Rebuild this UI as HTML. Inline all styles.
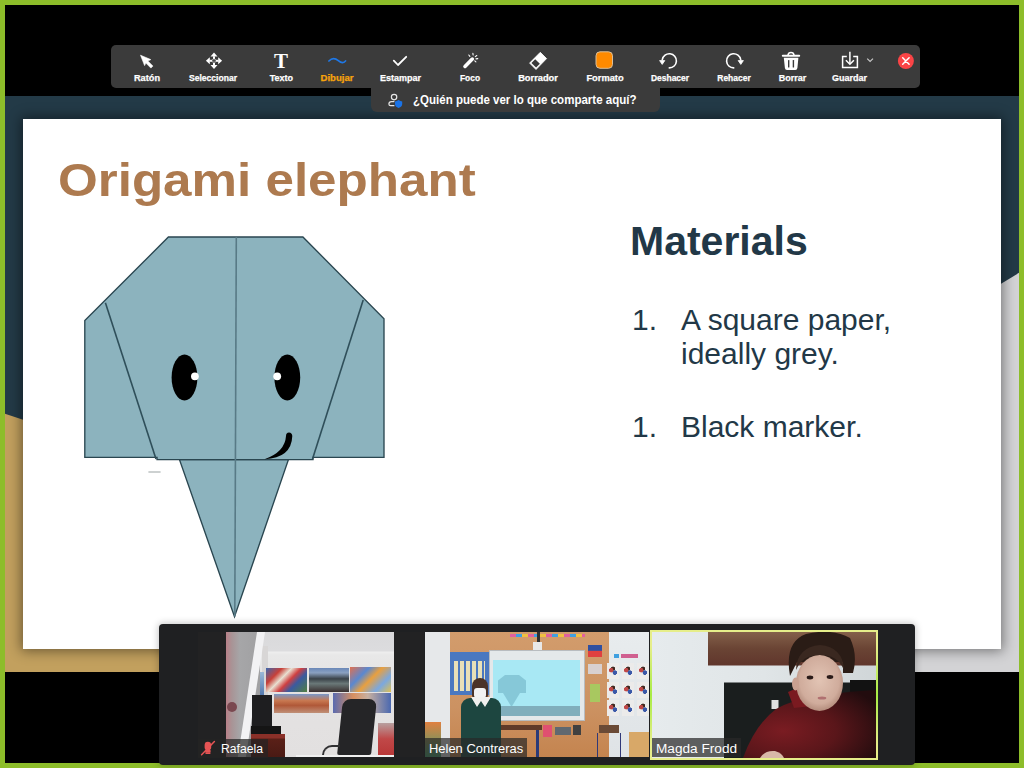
<!DOCTYPE html>
<html><head><meta charset="utf-8">
<style>
*{margin:0;padding:0;box-sizing:border-box}
html,body{width:1024px;height:768px;overflow:hidden;background:#000;font-family:"Liberation Sans",sans-serif}
#frame{position:absolute;left:0;top:0;width:1024px;height:768px;border:5px solid #8dbd2a;background:#000}
#pres{position:absolute;left:5px;top:96px;width:1014px;height:576px;background:#233a47;overflow:hidden}
#slide{position:absolute;left:23px;top:119px;width:978px;height:530px;background:#fff;box-shadow:0 0 12px 2px rgba(0,0,0,0.45)}
.abs{position:absolute}
#toolbar{position:absolute;left:111px;top:45px;width:809px;height:43px;background:#3b3b3b;border-radius:5px}
#tab{position:absolute;left:371px;top:87px;width:289px;height:25px;background:#3b3b3b;border-radius:0 0 6px 6px}
.tl{position:absolute;top:73.9px;-webkit-text-stroke:0.25px currentColor;line-height:9px;font-size:9px;font-weight:bold;color:#fff;white-space:nowrap;transform:translateX(-50%)}
#strip{position:absolute;left:159px;top:624px;width:756px;height:141px;background:#1f2022;border-radius:4px;box-shadow:0 0 7px 1px rgba(0,0,0,0.22)}
.tn{font-size:12.5px;line-height:12.5px;color:#fff;white-space:nowrap;transform-origin:0 0}
</style></head><body>
<div id="frame"></div>
<div id="pres">
  <svg class="abs" style="left:0;top:0" width="1014" height="576" viewBox="5 96 1014 576">
    <polygon points="5,413.8 600,610.8 600,672 5,672" fill="#c2a05e"/>
    <polygon points="1019,272.8 500,587.3 500,672 1019,672" fill="#d3d3d5"/>
  </svg>
</div>
<div id="slide">
</div>
<svg class="abs" style="left:0;top:0" width="1024" height="768" viewBox="0 0 1024 768">
<g stroke="#2a4650" stroke-width="1.35" fill="#8cb3be" stroke-linejoin="miter">
<polygon points="179.5,459.6 288.4,459.6 234.5,616.8"/>
<polygon points="168.4,237 302.9,237 384,318.7 384,457.3 313,457.3 313,459.6 157,459.6 157,457.3 84.8,457.3 84.8,320.6"/>
</g>
<g stroke="#2f4f5a" stroke-width="1.6" fill="none">
<line x1="105.4" y1="302.7" x2="156" y2="459"/>
<line x1="363.2" y1="300" x2="312.5" y2="459"/>
<line x1="236.3" y1="237" x2="234.8" y2="616.6" stroke="#587a86"/>
</g>
<ellipse cx="184.5" cy="377.5" rx="12.9" ry="23" fill="#000"/>
<ellipse cx="287.3" cy="377.5" rx="12.9" ry="23" fill="#000"/>
<circle cx="194.9" cy="376.3" r="3.9" fill="#fff"/>
<circle cx="277.2" cy="376.3" r="3.9" fill="#fff"/>
<path d="M149,472 L160,472" stroke="#9aa4a4" stroke-width="1.6" opacity="0.65" stroke-linecap="round"/>
<path d="M264.5,459.2 Q291.5,458 292.3,436 Q292,432.5 289,432.5 Q286,432.5 286,436 Q285,452 264.5,459.2 Z" fill="#000"/>
</svg>
<div id="title" class="abs" style="left:58px;top:155.5px;font-size:47px;line-height:47px;font-weight:bold;color:#ad7a4f;white-space:nowrap;transform-origin:0 0;transform:scaleX(1.088)">Origami elephant</div>
<div class="abs" style="left:630px;top:221px;font-size:41px;line-height:41px;font-weight:bold;color:#223847;white-space:nowrap">Materials</div>
<div class="abs" style="left:632px;top:303px;font-size:30px;line-height:34.3px;color:#223847;white-space:nowrap">1.</div>
<div class="abs" style="left:681px;top:303px;font-size:30px;line-height:34.3px;color:#223847;white-space:nowrap">A square paper,<br>ideally grey.</div>
<div class="abs" style="left:632px;top:410px;font-size:30px;line-height:34.3px;color:#223847;white-space:nowrap">1.</div>
<div class="abs" style="left:681px;top:410px;font-size:30px;line-height:34.3px;color:#223847;white-space:nowrap">Black marker.</div>
<div id="toolbar"></div>
<div id="tab"></div>
<svg class="abs" style="left:0;top:0" width="1024" height="120" viewBox="0 0 1024 120">
<path d="M140.5,55.2 L150.8,59.6 L147.9,61.1 L152.9,66.1 L150.9,68.1 L145.9,63.1 L144.6,65.6 Z" fill="#fff" stroke="#fff" stroke-width="0.6" stroke-linejoin="round"/>
<g fill="#fff">
<path d="M214,52.6 L217.5,56.5 L210.5,56.5 Z"/><rect x="213" y="56.3" width="2" height="2.6"/>
<path d="M214,69 L217.5,65.1 L210.5,65.1 Z"/><rect x="213" y="62.7" width="2" height="2.6"/>
<path d="M205.9,60.8 L209.8,57.3 L209.8,64.3 Z"/><rect x="209.6" y="59.8" width="2.6" height="2"/>
<path d="M222.1,60.8 L218.2,57.3 L218.2,64.3 Z"/><rect x="215.8" y="59.8" width="2.6" height="2"/>
<rect x="212.4" y="59.2" width="1" height="1"/><rect x="214.6" y="59.2" width="1" height="1"/>
<rect x="212.4" y="61.4" width="1" height="1"/><rect x="214.6" y="61.4" width="1" height="1"/>
</g>
<text x="281" y="68.3" font-family="Liberation Serif" font-weight="bold" font-size="21" fill="#fff" text-anchor="middle">T</text>
<path d="M328.9,61 C331.8,58 335,58 338.3,60.6 C341.5,63.3 344,63.3 345.6,60.9" stroke="#1f78e6" stroke-width="1.7" fill="none" stroke-linecap="round"/>
<path d="M393.8,60.6 L398,65 L406.2,56.8" stroke="#fff" stroke-width="1.8" fill="none" stroke-linecap="round" stroke-linejoin="round"/>
<path d="M465,66.4 L472.3,59.1" stroke="#fff" stroke-width="3.6" stroke-linecap="round"/>
<g stroke="#fff" stroke-width="1.1" stroke-linecap="round">
<path d="M468.8,55 L469.9,56.4"/><path d="M472.9,53.3 L473.1,55"/><path d="M476.8,55.5 L475.3,56.6"/><path d="M477.8,58.6 L476,58.9"/><path d="M475.9,61.8 L474.8,60.8"/>
</g>
<path d="M540.3,52.3 L546.6,58.6 L536,69.5 L529.6,63.1 Z" fill="#fff" stroke="#fff" stroke-width="0.8" stroke-linejoin="round"/>
<path d="M535.22,59.15 L539.85,63.72 L536.07,67.57 L531.44,63 Z" fill="#3b3b3b"/>

<rect x="596" y="51.8" width="16.5" height="16.5" rx="4" fill="#ff8a00" stroke="#d9bf9c" stroke-width="1"/>
<path d="M669.3,67.9 A7.1,7.1 0 1 0 662.3,59.6" stroke="#fff" stroke-width="1.6" fill="none" stroke-linecap="round"/>
<path d="M659.6,60.6 L664.8,60.6 L662.2,64.4 Z" fill="#fff" stroke="#fff" stroke-width="0.8" stroke-linejoin="round"/>
<path d="M733.7,67.9 A7.1,7.1 0 1 1 740.7,59.6" stroke="#fff" stroke-width="1.6" fill="none" stroke-linecap="round"/>
<path d="M738.2,60.6 L743.4,60.6 L740.8,64.4 Z" fill="#fff" stroke="#fff" stroke-width="0.8" stroke-linejoin="round"/>
<path d="M782.8,55.8 L799.2,55.8" stroke="#fff" stroke-width="2" stroke-linecap="round"/>
<path d="M787.9,55.3 Q788.3,52.6 791,52.6 Q793.7,52.6 794.1,55.3" stroke="#fff" stroke-width="1.5" fill="none"/>
<path d="M783.8,57.8 L798.4,57.8 L797.4,68 Q797.2,69.9 795.3,69.9 L787,69.9 Q785.1,69.9 784.9,68 Z" fill="#fff"/>
<rect x="788" y="60.1" width="1.4" height="7.4" rx="0.5" fill="#3b3b3b"/>
<rect x="792.7" y="60.1" width="1.4" height="7.4" rx="0.5" fill="#3b3b3b"/>
<path d="M846.8,56.6 L842.6,56.6 L842.6,67.4 L857.4,67.4 L857.4,56.6 L853.2,56.6" stroke="#fff" stroke-width="1.5" fill="none"/>
<path d="M849.9,51.8 L849.9,63.6" stroke="#fff" stroke-width="1.5"/>
<path d="M845.9,60.2 L849.9,64.2 L853.9,60.2" stroke="#fff" stroke-width="1.5" fill="none"/>
<path d="M867.2,58.6 L870.1,61.5 L873,58.6" stroke="#c8c8c8" stroke-width="1.2" fill="none"/>
<circle cx="905.9" cy="61" r="8" fill="#fa4446"/>
<path d="M902.7,57.8 L909.1,64.2 M909.1,57.8 L902.7,64.2" stroke="#fff" stroke-width="1.5" stroke-linecap="round"/>
<circle cx="394.1" cy="97.1" r="2.7" stroke="#e6e6e6" stroke-width="1.2" fill="none"/>
<path d="M394.4,101.7 L391.5,101.7 Q388.9,101.8 388.9,104 Q388.9,105.6 390.6,105.6 L394.4,105.6" stroke="#e6e6e6" stroke-width="1.2" fill="none"/>
<path d="M398.6,99.9 Q400.5,101.3 402.2,101.5 L402.2,104.2 Q402,106.8 398.6,108 Q395.2,106.8 395,104.2 L395,101.5 Q396.7,101.3 398.6,99.9 Z" fill="#1a73e8"/>
</svg>
<div class="abs" style="left:412.9px;top:93.8px;font-size:12.5px;line-height:12.5px;font-weight:bold;color:#fff;white-space:nowrap;transform-origin:0 0;transform:scaleX(0.922)">¿Quién puede ver lo que comparte aquí?</div>
<div class="tl" style="left:147.1px;color:#fff;transform:translateX(-50%) scaleX(1.02)">Ratón</div>
<div class="tl" style="left:213.2px;color:#fff;transform:translateX(-50%) scaleX(0.95)">Seleccionar</div>
<div class="tl" style="left:281.4px;color:#fff;transform:translateX(-50%) scaleX(1)">Texto</div>
<div class="tl" style="left:337.4px;color:#f7a30c;transform:translateX(-50%) scaleX(1.06)">Dibujar</div>
<div class="tl" style="left:400.4px;color:#fff;transform:translateX(-50%) scaleX(1)">Estampar</div>
<div class="tl" style="left:470.1px;color:#fff;transform:translateX(-50%) scaleX(0.93)">Foco</div>
<div class="tl" style="left:538.3px;color:#fff;transform:translateX(-50%) scaleX(1.03)">Borrador</div>
<div class="tl" style="left:604.8px;color:#fff;transform:translateX(-50%) scaleX(1.03)">Formato</div>
<div class="tl" style="left:669.5px;color:#fff;transform:translateX(-50%) scaleX(0.94)">Deshacer</div>
<div class="tl" style="left:734.0px;color:#fff;transform:translateX(-50%) scaleX(0.94)">Rehacer</div>
<div class="tl" style="left:792.5px;color:#fff;transform:translateX(-50%) scaleX(1)">Borrar</div>
<div class="tl" style="left:849.4px;color:#fff;transform:translateX(-50%) scaleX(1)">Guardar</div>
<div id="strip"></div>
<div id="tiles">
<div class="abs" style="left:198px;top:632px;width:226px;height:125px;background:#222223"></div>
<!-- tile1 -->
<div class="abs" style="left:226px;top:632px;width:168px;height:125px;overflow:hidden;background:linear-gradient(#d9d9db 0,#dcdcde 19px,#eeeeee 20px,#e8e8e8 23px,#e4e2e2 60px,#e2e0e0 125px)">
  <div class="abs" style="left:36px;top:14px;width:6px;height:111px;background:#d8d6d6"></div>
  <div class="abs" style="left:31px;top:40px;width:7px;height:27px;background:linear-gradient(#9ab8d8,#4a70a8)"></div>
  <div class="abs" style="left:0;top:0;width:34px;height:125px;background:linear-gradient(90deg,#b88088 0,#a89496 6px,#a6a6a8 14px,#a0a0a2 34px)"></div>
  <div class="abs" style="left:30.5px;top:0;width:7.5px;height:125px;background:#f2f2f4;transform:skewX(-8.7deg);transform-origin:0 0"></div>
  <div class="abs" style="left:1px;top:70px;width:10px;height:10px;border-radius:50%;background:#7a4850"></div>
  <div class="abs" style="left:40px;top:36px;width:41px;height:24px;background:linear-gradient(135deg,#3a68b0 0,#c84038 25%,#e8e0d0 40%,#d04040 55%,#3a5aa0 70%,#508040 100%)"></div>
  <div class="abs" style="left:83px;top:35.5px;width:40px;height:24.5px;background:linear-gradient(#6a88b8 0,#8aa0c0 20%,#3a4248 45%,#6a7878 65%,#3a3030 100%)"></div>
  <div class="abs" style="left:124px;top:35px;width:41px;height:25px;background:linear-gradient(135deg,#e07050 0,#5a88d0 30%,#e8a040 50%,#7aa8e0 75%,#e0c050 100%)"></div>
  <div class="abs" style="left:47.5px;top:62px;width:55px;height:19px;background:linear-gradient(#7a98c8 0,#c87850 35%,#b05838 60%,#c09078 100%)"></div>
  <div class="abs" style="left:106.5px;top:61px;width:58px;height:20px;background:linear-gradient(90deg,#5a6ab0,#d89060 35%,#c8b0a0 60%,#4a68b0)"></div>
  <div class="abs" style="left:26px;top:63px;width:20px;height:31px;background:#1e1e20"></div>
  <div class="abs" style="left:24.5px;top:94px;width:30px;height:8px;background:#151515"></div>
  <div class="abs" style="left:24.5px;top:101.5px;width:34.5px;height:23.5px;background:linear-gradient(#8a3028 0,#8a3028 4px,#5a2018 5px,#4a1a14 100%)"></div>
  <div class="abs" style="left:114px;top:67px;width:34px;height:56px;background:#252527;border-radius:8px 8px 2px 2px;transform:skewX(-6deg)"></div>
  <div class="abs" style="left:96px;top:113px;width:18px;height:14px;border:2px solid #303032;border-right:none;border-bottom:none;border-radius:10px 0 0 0"></div>
  <div class="abs" style="left:152px;top:91px;width:16px;height:32px;background:linear-gradient(#b8a0a0,#c04848 50%,#b83838)"></div>
  <div class="abs" style="left:70px;top:123px;width:98px;height:2px;background:#f0f0f0"></div>
</div>
<div class="abs" style="left:198px;top:738.5px;width:69.5px;height:19px;background:rgba(36,36,36,0.72)"></div>
<svg class="abs" style="left:195px;top:735px" width="25" height="25" viewBox="0 0 25 25">
<path d="M12.8,6.8 Q16.2,6.8 16.2,10.2 L16.2,12.5 Q16.2,14 15.2,14.6 L15.8,16.2 L15,17.5 L10.7,17.5 L10,16.2 L10.6,14.6 Q9.6,14 9.6,12.5 L9.6,10.2 Q9.6,6.8 12.8,6.8 Z" fill="#e65454"/>
<rect x="10.2" y="17.3" width="5.5" height="1.6" rx="0.8" fill="#e65454"/>
<path d="M6.6,19.8 L19.4,6.6" stroke="#e65454" stroke-width="1.5" stroke-linecap="round"/>
</svg>
<div class="abs tn" style="left:221px;top:743px;transform:scaleX(0.975)">Rafaela</div>
<!-- tile2 -->
<div class="abs" style="left:425px;top:632px;width:224px;height:125px;overflow:hidden;background:#e6e8ea">
  <div class="abs" style="left:25px;top:0;width:159px;height:125px;background:linear-gradient(#d29c6c,#cc9262 60%,#c4844f)"></div>
  <div class="abs" style="left:85px;top:2px;width:75px;height:3px;background:repeating-linear-gradient(90deg,#e060a0 0,#e060a0 6px,#40a0e0 6px,#40a0e0 12px,#f0c040 12px,#f0c040 18px)"></div>
  <div class="abs" style="left:112px;top:0;width:3px;height:20px;background:#303030"></div>
  <div class="abs" style="left:108px;top:10px;width:9px;height:8px;background:#e8e8e8"></div>
  <div class="abs" style="left:111px;top:94px;width:3px;height:31px;background:#2a3a78"></div>
  <div class="abs" style="left:76px;top:93px;width:41px;height:5px;background:#603a28"></div>
  <div class="abs" style="left:184px;top:0;width:40px;height:125px;background:linear-gradient(#e8ecee,#dfe3e6)"></div>
  <div class="abs" style="left:25px;top:20px;width:39px;height:43px;background:#4a78c0"></div>
  <div class="abs" style="left:29px;top:29px;width:31px;height:30px;background:repeating-linear-gradient(90deg,#e8e0b8 0,#e8e0b8 4px,#4a78c0 4px,#4a78c0 6px)"></div>
  <div class="abs" style="left:64px;top:18px;width:96px;height:71px;background:#e4e8ea;border:1px solid #b8bcc0"></div>
  <div class="abs" style="left:68px;top:28px;width:87px;height:56px;background:#a8e8f4"></div>
  <div class="abs" style="left:73px;top:43px;width:28px;height:18px;background:#86c8d8;clip-path:polygon(25% 0,75% 0,100% 30%,100% 100%,0 100%,0 30%)"></div>
  <div class="abs" style="left:78px;top:61px;width:17px;height:14px;background:#86c8d8;clip-path:polygon(0 0,100% 0,50% 100%)"></div>
  <div class="abs" style="left:68px;top:74px;width:87px;height:10px;background:#80aebc"></div>
  <div class="abs" style="left:163px;top:13px;width:14px;height:12px;background:linear-gradient(#3050a0 0,#3050a0 45%,#e04040 50%)"></div>
  <div class="abs" style="left:163px;top:32px;width:14px;height:10px;background:#d8d0d0"></div>
  <div class="abs" style="left:165px;top:52px;width:10px;height:18px;background:#a8c860"></div>
  <div class="abs" style="left:182px;top:31px;width:12px;height:16px;background:radial-gradient(circle at 35% 45%,#c04848 0,#c04848 2px,transparent 2.5px),radial-gradient(circle at 65% 60%,#3a58a8 0,#3a58a8 2px,transparent 2.5px),radial-gradient(circle at 50% 35%,#402820 0,#402820 1.8px,transparent 2.3px),#ecebea"></div>
  <div class="abs" style="left:182px;top:50px;width:12px;height:16px;background:radial-gradient(circle at 35% 45%,#c04848 0,#c04848 2px,transparent 2.5px),radial-gradient(circle at 65% 60%,#3a58a8 0,#3a58a8 2px,transparent 2.5px),radial-gradient(circle at 50% 35%,#402820 0,#402820 1.8px,transparent 2.3px),#ecebea"></div>
  <div class="abs" style="left:182px;top:68px;width:12px;height:16px;background:radial-gradient(circle at 35% 45%,#c04848 0,#c04848 2px,transparent 2.5px),radial-gradient(circle at 65% 60%,#3a58a8 0,#3a58a8 2px,transparent 2.5px),radial-gradient(circle at 50% 35%,#402820 0,#402820 1.8px,transparent 2.3px),#ecebea"></div>
  <div class="abs" style="left:197px;top:31px;width:12px;height:16px;background:radial-gradient(circle at 35% 45%,#c04848 0,#c04848 2px,transparent 2.5px),radial-gradient(circle at 65% 60%,#3a58a8 0,#3a58a8 2px,transparent 2.5px),radial-gradient(circle at 50% 35%,#402820 0,#402820 1.8px,transparent 2.3px),#ecebea"></div>
  <div class="abs" style="left:197px;top:50px;width:12px;height:16px;background:radial-gradient(circle at 35% 45%,#c04848 0,#c04848 2px,transparent 2.5px),radial-gradient(circle at 65% 60%,#3a58a8 0,#3a58a8 2px,transparent 2.5px),radial-gradient(circle at 50% 35%,#402820 0,#402820 1.8px,transparent 2.3px),#ecebea"></div>
  <div class="abs" style="left:197px;top:68px;width:12px;height:16px;background:radial-gradient(circle at 35% 45%,#c04848 0,#c04848 2px,transparent 2.5px),radial-gradient(circle at 65% 60%,#3a58a8 0,#3a58a8 2px,transparent 2.5px),radial-gradient(circle at 50% 35%,#402820 0,#402820 1.8px,transparent 2.3px),#ecebea"></div>
  <div class="abs" style="left:212px;top:31px;width:12px;height:16px;background:radial-gradient(circle at 35% 45%,#c04848 0,#c04848 2px,transparent 2.5px),radial-gradient(circle at 65% 60%,#3a58a8 0,#3a58a8 2px,transparent 2.5px),radial-gradient(circle at 50% 35%,#402820 0,#402820 1.8px,transparent 2.3px),#ecebea"></div>
  <div class="abs" style="left:212px;top:50px;width:12px;height:16px;background:radial-gradient(circle at 35% 45%,#c04848 0,#c04848 2px,transparent 2.5px),radial-gradient(circle at 65% 60%,#3a58a8 0,#3a58a8 2px,transparent 2.5px),radial-gradient(circle at 50% 35%,#402820 0,#402820 1.8px,transparent 2.3px),#ecebea"></div>
  <div class="abs" style="left:212px;top:68px;width:12px;height:16px;background:radial-gradient(circle at 35% 45%,#c04848 0,#c04848 2px,transparent 2.5px),radial-gradient(circle at 65% 60%,#3a58a8 0,#3a58a8 2px,transparent 2.5px),radial-gradient(circle at 50% 35%,#402820 0,#402820 1.8px,transparent 2.3px),#ecebea"></div>
  <div class="abs" style="left:189px;top:22px;width:24px;height:4px;background:linear-gradient(90deg,#40a0e0 0,#40a0e0 5px,transparent 5px,transparent 7px,#d06090 7px)"></div>
  <div class="abs" style="left:47px;top:46px;width:16px;height:20px;background:#4a3228;border-radius:8px 8px 3px 3px"></div>
  <div class="abs" style="left:49px;top:56px;width:12px;height:10px;background:#f2f2f2;border-radius:3px"></div>
  <div class="abs" style="left:36px;top:66px;width:40px;height:59px;background:#1d4640;border-radius:9px 9px 0 0"></div>
  <div class="abs" style="left:46px;top:65px;width:20px;height:10px;background:#f0f0ee;clip-path:polygon(0 0,100% 0,70% 100%,50% 40%,30% 100%)"></div>
  <div class="abs" style="left:118px;top:93px;width:9px;height:12px;background:#e05070"></div>
  <div class="abs" style="left:130px;top:95px;width:16px;height:8px;background:#606870"></div>
  <div class="abs" style="left:148px;top:93px;width:8px;height:10px;background:#404040"></div>
  <div class="abs" style="left:174px;top:93px;width:20px;height:8px;background:#6a4a36"></div>
  <div class="abs" style="left:172px;top:101px;width:24px;height:24px;border-left:1px solid #303878;border-right:1px solid #303878"></div>
  <div class="abs" style="left:204px;top:100px;width:20px;height:25px;background:#d8a868"></div>
  <div class="abs" style="left:0;top:90px;width:16px;height:35px;background:linear-gradient(#e08040,#40a070)"></div>
</div>
<div class="abs" style="left:425px;top:738px;width:102px;height:19px;background:rgba(40,40,40,0.7)"></div>
<div class="abs tn" style="left:429px;top:743px;transform:scaleX(1.035)">Helen Contreras</div>
<!-- tile3 -->
<div class="abs" style="left:650px;top:630px;width:228px;height:130px;background:linear-gradient(#e6ee8a 0,#e6ee8a 12%,#a8ec44 50%,#e6ee8a 88%)"></div>
<div class="abs" style="left:650px;top:630px;width:228px;height:2px;background:#e6ee8a"></div>
<div class="abs" style="left:650px;top:758px;width:228px;height:2px;background:#e6ee8a"></div>
<div class="abs" style="left:652px;top:632px;width:224px;height:126px;overflow:hidden;background:#dfe4e6">
<svg class="abs" style="left:0;top:0" width="224" height="126" viewBox="652 632 224 126">
<defs>
<linearGradient id="wall3" x1="0" x2="1" y1="0" y2="0"><stop offset="0" stop-color="#e6ebed"/><stop offset="0.5" stop-color="#e0e5e7"/><stop offset="1" stop-color="#d0d6d8"/></linearGradient>
<linearGradient id="paint3" x1="0" x2="0" y1="0" y2="1"><stop offset="0" stop-color="#84604a"/><stop offset="0.5" stop-color="#6a4434"/><stop offset="1" stop-color="#60362c"/></linearGradient>
<radialGradient id="face3" cx="0.5" cy="0.45" r="0.6"><stop offset="0" stop-color="#e2c4b4"/><stop offset="0.7" stop-color="#d0ac9c"/><stop offset="1" stop-color="#a88070"/></radialGradient>
<radialGradient id="sw3" cx="0.3" cy="0.6" r="0.8"><stop offset="0" stop-color="#7a1c22"/><stop offset="0.5" stop-color="#5a161a"/><stop offset="1" stop-color="#220c0e"/></radialGradient>
</defs>
<rect x="652" y="632" width="224" height="126" fill="url(#wall3)"/>
<rect x="708" y="632" width="168" height="33.5" fill="url(#paint3)"/>
<rect x="724" y="682.5" width="152" height="75.5" fill="#1a1e1e"/>
<rect x="850" y="680" width="26" height="78" fill="#121212"/>
<rect x="771.5" y="700" width="7" height="9" fill="#e0e0e0"/>
<path d="M743,758 Q755,725 776,709 Q800,694 876,690 L876,758 Z" fill="url(#sw3)"/>
<path d="M788,692 Q798,686 810,692 L812,706 L794,708 Z" fill="#7a1a20"/>
<path d="M790,676 Q784,642 806,634 Q832,628 850,638 Q858,655 853,673 L843,673 L843,662 L797,662 Z" fill="#2a1c16"/>
<ellipse cx="819.5" cy="683" rx="23.5" ry="28" fill="url(#face3)"/>
<path d="M796,670 Q797,647 820,645 Q843,647 844,670 Q838,655 820,655 Q802,655 796,670 Z" fill="#3a2820"/>
<ellipse cx="795.5" cy="684" rx="3.5" ry="6.5" fill="#c8a090"/>
<ellipse cx="810" cy="677.5" rx="3.3" ry="1.9" fill="#2a1a18"/>
<ellipse cx="830" cy="677" rx="3.3" ry="1.9" fill="#2a1a18"/>
<ellipse cx="822" cy="698" rx="4.3" ry="1.5" fill="#b07070"/>
<path d="M760,758 Q765,750 775,751 Q782,753 784,758 Z" fill="#d8b8a8"/>
</svg>
</div>
<div class="abs" style="left:652px;top:738px;width:89px;height:19px;background:rgba(40,40,40,0.72)"></div>
<div class="abs tn" style="left:656px;top:743px;transform:scaleX(1.09)">Magda Frodd</div>
</div>

</body></html>
